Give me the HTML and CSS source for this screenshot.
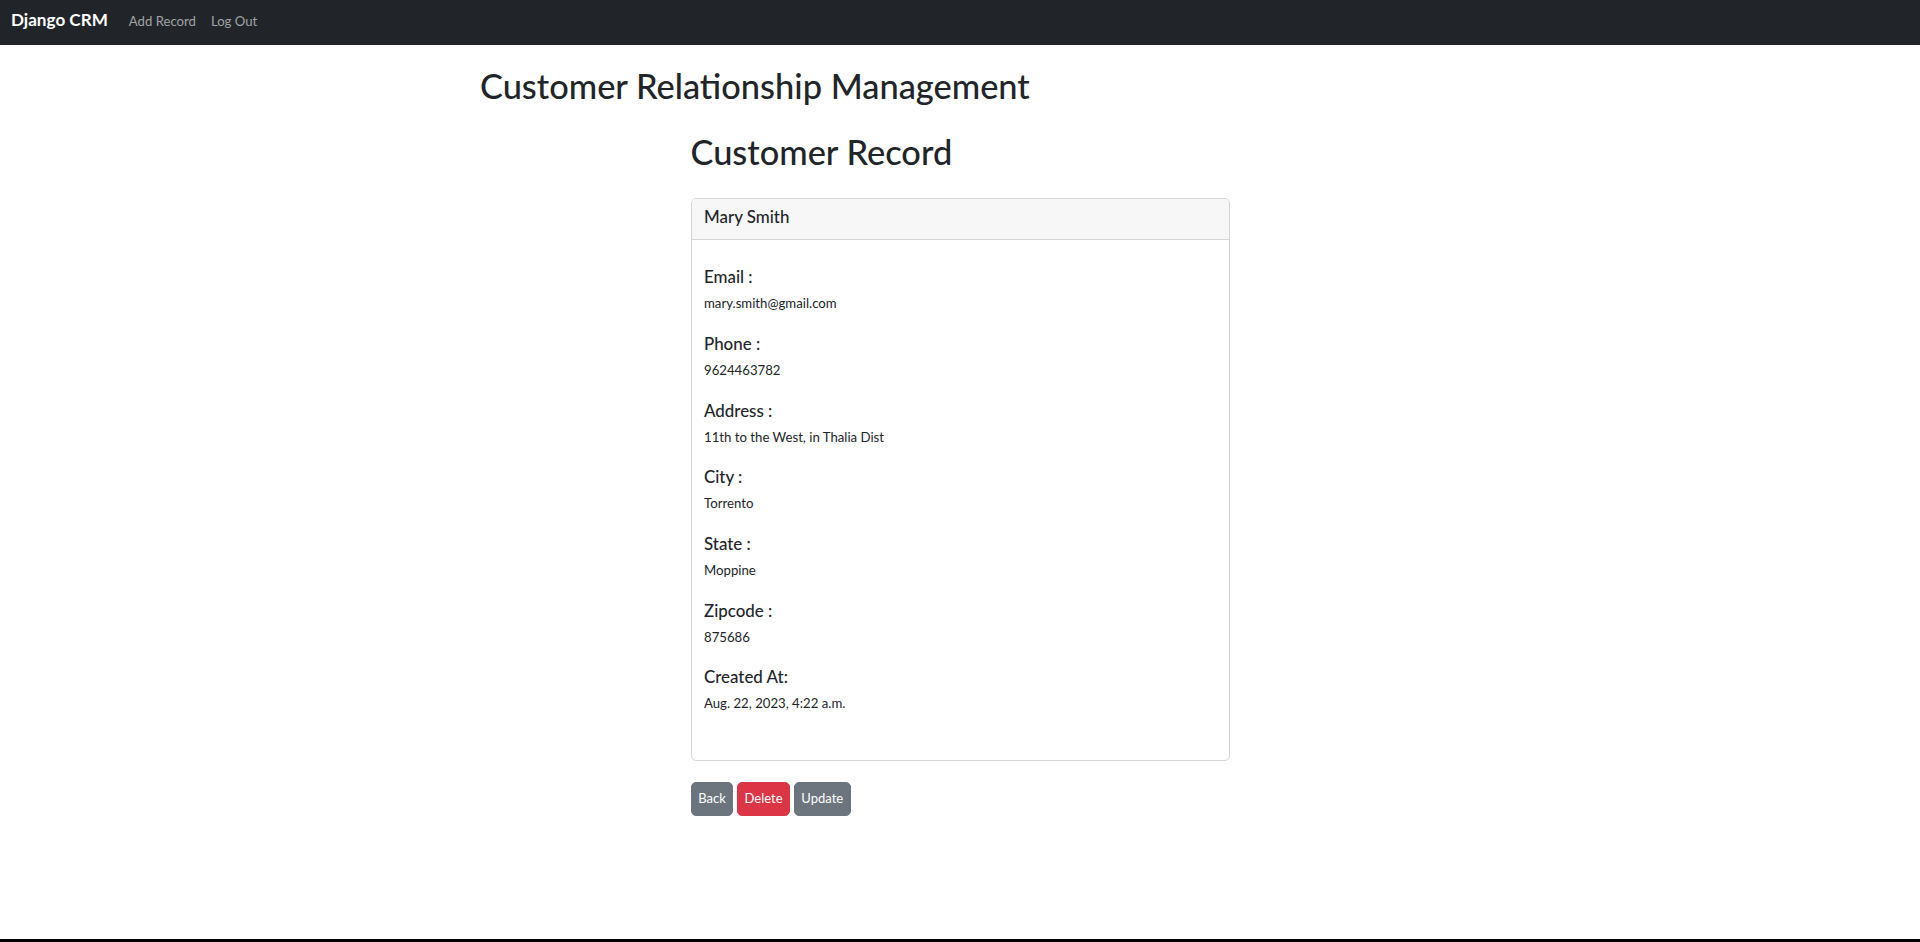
FILE: index.html
```html
<!DOCTYPE html>
<html lang="en">
<head>
<meta charset="utf-8">
<title>Django CRM</title>
<link rel="stylesheet" href="styles.css">
</head>
<body>
<nav class="navbar">
  <a class="brand" href="#">Django CRM</a>
  <a class="nav-link" href="#">Add Record</a>
  <a class="nav-link" href="#">Log Out</a>
</nav>
<main class="container">
  <h1 class="title">Customer Relationship Management</h1>
  <section class="record">
    <h1 class="title title-record">Customer Record</h1>
    <div class="card">
      <div class="card-header"><h5 class="card-title">Mary Smith</h5></div>
      <div class="card-body">
        <div class="field"><h5 class="label">Email :</h5><p class="value">mary.smith@gmail.com</p></div>
        <div class="field"><h5 class="label">Phone :</h5><p class="value">9624463782</p></div>
        <div class="field"><h5 class="label">Address :</h5><p class="value">11th to the West, in Thalia Dist</p></div>
        <div class="field"><h5 class="label">City :</h5><p class="value">Torrento</p></div>
        <div class="field"><h5 class="label">State :</h5><p class="value">Moppine</p></div>
        <div class="field"><h5 class="label">Zipcode :</h5><p class="value">875686</p></div>
        <div class="field"><h5 class="label">Created At:</h5><p class="value">Aug. 22, 2023, 4:22 a.m.</p></div>
      </div>
    </div>
    <div class="actions">
      <a class="btn btn-secondary" href="#">Back</a>
      <a class="btn btn-danger" href="#">Delete</a>
      <a class="btn btn-secondary" href="#">Update</a>
    </div>
  </section>
</main>
<div class="window-edge"></div>
</body>
</html>
```

FILE: styles.css
```css
* { box-sizing: border-box; }
html, body { margin: 0; padding: 0; }
body {
  font-family: "Lato", "Open Sans", sans-serif;
  color: #212529;
  background: #fff;
  min-height: 100vh;
  display: flex;
  flex-direction: column;
}
a { text-decoration: none; }

.navbar {
  height: 45px;
  background: #212529;
  display: flex;
  align-items: baseline;
  padding: 10.4px 11px 0;
  flex-shrink: 0;
}
.brand {
  color: #fff;
  font-weight: 700;
  font-size: 17.1px;
  line-height: 1.2;
  margin-right: 13.5px;
}
.nav-link {
  color: #a0a2a4;
  font-size: 13.15px;
  line-height: 1.2;
  padding: 0 7.5px;
}

.container {
  width: 960px;
  margin: 0 auto;
  padding-top: 19.6px;
  flex: 1;
}
.title {
  font-size: 34.4px;
  font-weight: 500;
  line-height: 1.2;
  margin: 0 0 25.6px;
}
.title-record { margin: 0 0 25.6px; }

.record { width: 539px; margin: 0 auto; }

.card {
  border: 1px solid #d5d5d5;
  border-radius: 5px;
  overflow: hidden;
}
.card-header {
  background: #f7f7f7;
  border-bottom: 1px solid #d5d5d5;
  padding: 6.5px 12.5px 11.9px;
}
.card-title, .label {
  font-size: 16.9px;
  font-weight: 500;
  line-height: 21.6px;
  margin: 0;
}
.card-body { padding: 26.1px 12.5px 26.5px; }
.label { margin-bottom: 5.4px; }
.value {
  font-size: 13.2px;
  line-height: 20px;
  margin: 0 0 19.7px;
}

.actions {
  display: flex;
  gap: 3.4px;
  margin-top: 21px;
}
.btn {
  display: inline-block;
  color: #fff;
  font-size: 13px;
  line-height: 21px;
  padding: 5.75px 6.7px;
  border: 1px solid transparent;
  border-radius: 5px;
}
.btn-secondary { background: #6c757d; border-color: #6c757d; }
.btn-danger { background: #dc3545; border-color: #dc3545; }

.window-edge { height: 3px; background: #000; flex-shrink: 0; }
```
